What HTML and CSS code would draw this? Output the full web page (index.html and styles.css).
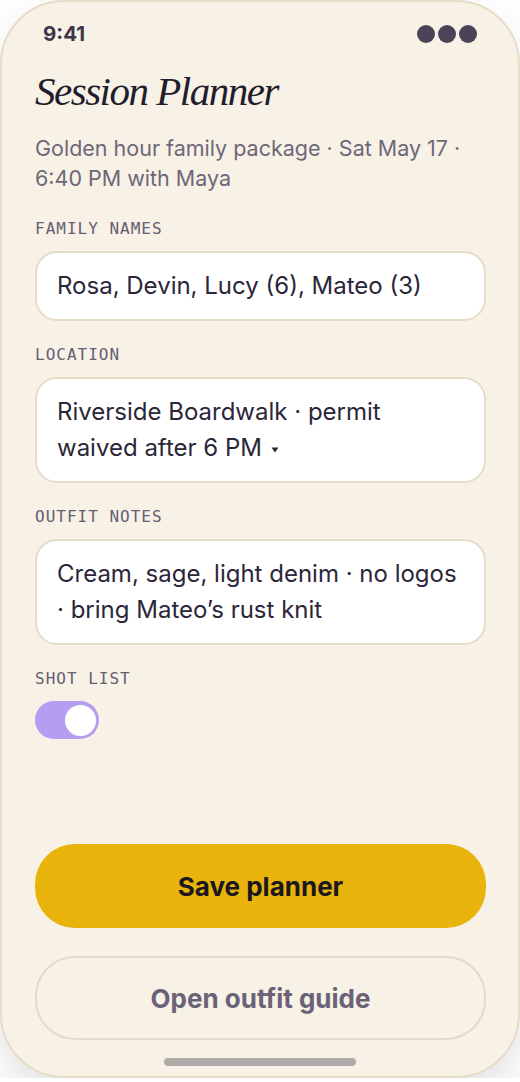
FILE: index.html
```html
<!DOCTYPE html>
<html lang="en">
<head>
    <meta charset="UTF-8">
    <meta name="viewport" content="width=device-width, initial-scale=1.0">
    <title>Session Planner</title>
    <link rel="stylesheet" href="styles.css">
</head>
<body>
    <div class="phone">
        <div class="status-bar">
            <span class="time">9:41</span>
            <span class="status-dots"><i></i><i></i><i></i></span>
        </div>

        <main class="content">
            <h1 class="title">Session Planner</h1>
            <p class="subtitle">Golden hour family package · Sat May 17 · 6:40 PM with Maya</p>

            <div class="field">
                <div class="field-label">FAMILY NAMES</div>
                <div class="field-box">Rosa, Devin, Lucy (6), Mateo (3)</div>
            </div>

            <div class="field">
                <div class="field-label">LOCATION</div>
                <div class="field-box">Riverside Boardwalk · permit waived after 6 PM <svg class="caret" width="8" height="6" viewBox="0 0 8 6"><path d="M0.5 0.5h7L4 5.5z" fill="#2b2639"/></svg></div>
            </div>

            <div class="field">
                <div class="field-label">OUTFIT NOTES</div>
                <div class="field-box">Cream, sage, light denim · no logos · bring Mateo’s rust knit</div>
            </div>

            <div class="field">
                <div class="field-label">SHOT LIST</div>
                <div class="toggle is-on"><span class="toggle-knob"></span></div>
            </div>

            <div class="actions">
                <button class="btn btn-primary">Save planner</button>
                <button class="btn btn-secondary">Open outfit guide</button>
            </div>
        </main>

        <div class="home-indicator"></div>
    </div>
</body>
</html>
```

FILE: styles.css
```css
* {
    box-sizing: border-box;
}

body {
    margin: 0;
    background: #ffffff;
    font-family: Inter, "Noto Sans", sans-serif;
    color: #2b2639;
}

.phone {
    width: 520px;
    height: 1078px;
    border: 2px solid #e6dcc8;
    border-radius: 64px;
    background: #f7f1e6;
    box-shadow: 0 18px 40px rgba(0, 0, 0, 0.12);
    display: flex;
    flex-direction: column;
    overflow: hidden;
}

.status-bar {
    display: flex;
    justify-content: space-between;
    align-items: center;
    padding: 19px 41px 0 41px;
    height: 44px;
}

.time {
    font-size: 20.5px;
    font-weight: 700;
    color: #3d3748;
}

.status-dots {
    display: flex;
    gap: 3px;
}

.status-dots i {
    width: 18px;
    height: 18px;
    border-radius: 50%;
    background: #4b4459;
}

.content {
    flex: 1;
    display: flex;
    flex-direction: column;
    padding: 0 32px 0 33px;
}

.title {
    margin: 22px 0 0;
    font-family: "Liberation Serif", serif;
    font-style: italic;
    font-weight: 400;
    font-size: 41px;
    line-height: 46px;
    letter-spacing: -1.5px;
    color: #221d2c;
}

.subtitle {
    margin: 19px 0 26px;
    font-size: 21.5px;
    line-height: 30px;
    color: #6e6779;
}

.field {
    margin-bottom: 24px;
}

.field-label {
    font-family: "DejaVu Sans Mono", monospace;
    font-size: 16px;
    line-height: 20px;
    letter-spacing: 1px;
    color: #655e72;
    margin-bottom: 12px;
}

.field-box {
    background: #ffffff;
    border: 2px solid #e6dcc8;
    border-radius: 22px;
    padding: 15px 20px;
    font-size: 24px;
    line-height: 36px;
    color: #2b2639;
}

.caret {
    vertical-align: 3px;
    margin-left: 2px;
}

.toggle {
    width: 64px;
    height: 38px;
    border-radius: 19px;
    background: #b59df1;
    display: flex;
    align-items: center;
    padding: 0 3px;
}

.toggle.is-on {
    justify-content: flex-end;
}

.toggle-knob {
    width: 31px;
    height: 31px;
    border-radius: 50%;
    background: #ffffff;
}

.actions {
    margin-top: auto;
    display: flex;
    flex-direction: column;
    gap: 28px;
}

.btn {
    width: 100%;
    height: 84px;
    border-radius: 40px;
    font-family: Inter, "Noto Sans", sans-serif;
    font-size: 26px;
    font-weight: 700;
    cursor: pointer;
}

.btn-primary {
    background: #e8b30a;
    border: none;
    color: #1b1720;
}

.btn-secondary {
    background: transparent;
    border: 2px solid #e3dac7;
    color: #6b6278;
}

.home-indicator {
    align-self: center;
    width: 192px;
    height: 8px;
    border-radius: 4px;
    background: #b0aaa8;
    margin: 18px 0 10px;
}
```
